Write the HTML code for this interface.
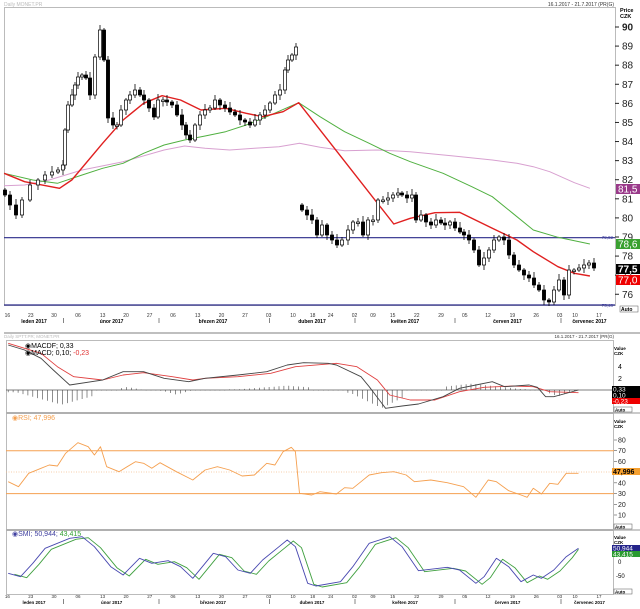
<!DOCTYPE html>
<html><head><meta charset="utf-8"><style>
body{margin:0;background:#fff;width:640px;height:609px;overflow:hidden;font-family:"Liberation Sans",sans-serif}
svg{display:block}
text{font-family:"Liberation Sans",sans-serif}
</style></head><body>
<svg id="s" width="640" height="609" viewBox="0 0 640 609" xmlns="http://www.w3.org/2000/svg">
<rect width="640" height="609" fill="#fff"/>
<text x="4" y="6" font-size="5" fill="#bbb">Daily MONET.PR</text>
<text x="614" y="6" font-size="5" fill="#333" text-anchor="end">16.1.2017 - 21.7.2017 (PR(G)</text>
<rect x="4.5" y="7.5" width="611" height="298" fill="none" stroke="#bbb"/>
<text x="620" y="12" font-size="5.5" font-weight="bold">Price</text>
<text x="620" y="18" font-size="5.5" font-weight="bold">CZK</text>
<g font-size="10" fill="#222" id="paxis"></g>
<line x1="4" y1="237.7" x2="615" y2="237.7" stroke="#2a2a8a" stroke-width="1.2"/>
<line x1="4" y1="305" x2="615" y2="305" stroke="#2a2a8a" stroke-width="1.2"/>
<text x="613" y="239" font-size="4.5" fill="#4040a0" text-anchor="end">79,02</text>
<text x="613" y="307" font-size="4.5" fill="#4040a0" text-anchor="end">75,48</text>
<g id="ma"></g>
<g id="candles"></g>
<rect x="616" y="184" width="24" height="10" fill="#9a3a8a"/><text x="618" y="192.5" font-size="10" fill="#fff">81,5</text>
<rect x="616" y="239" width="24" height="10" fill="#3aa030"/><text x="618" y="247.5" font-size="10" fill="#fff">78,6</text>
<rect x="616" y="264" width="24" height="10" fill="#000"/><text x="618" y="272.5" font-size="10" fill="#fff" font-weight="bold">77,5</text>
<rect x="616" y="275" width="24" height="10" fill="#e00"/><text x="618" y="283.5" font-size="10" fill="#fff">77,0</text>
<rect x="620" y="306" width="18" height="6" fill="#fff" stroke="#555" stroke-width=".5"/><text x="621" y="311" font-size="5" font-weight="bold">Auto</text>
<g id="xaxis1"></g>
<line x1="4" y1="333" x2="640" y2="333" stroke="#aaa" stroke-width="1.5"/>
<text x="4" y="338" font-size="4.5" fill="#bbb">Daily SPTT.PR; MONET.PR</text>
<text x="614" y="338" font-size="4.5" fill="#333" text-anchor="end">16.1.2017 - 21.7.2017 (PR(G)</text>
<rect x="6.5" y="340.5" width="607" height="72" fill="none" stroke="#bbb"/>
<line x1="6" y1="390" x2="614" y2="390" stroke="#555" stroke-width=".7"/>
<g id="macd"></g>
<text x="25" y="348" font-size="7">&#9673;MACDF; 0,33</text>
<text x="25" y="355" font-size="7">&#9673;MACD; 0,10; <tspan fill="#e03030">-0,23</tspan></text>
<text x="614" y="350" font-size="4.5" font-weight="bold">Value</text><text x="614" y="355" font-size="4.5" font-weight="bold">CZK</text>
<text x="618" y="369" font-size="7">4</text><text x="618" y="381" font-size="7">2</text>
<rect x="612" y="386" width="28" height="6" fill="#000"/><text x="613" y="391.5" font-size="6.5" fill="#fff">0,33</text>
<rect x="612" y="392" width="28" height="6" fill="#000"/><text x="613" y="397.5" font-size="6.5" fill="#fff">0,10</text>
<rect x="612" y="398" width="28" height="6" fill="#e00"/><text x="613" y="403.5" font-size="6.5" fill="#fff">-0,23</text>
<rect x="614" y="407" width="18" height="5" fill="#fff" stroke="#555" stroke-width=".5"/><text x="615" y="411.5" font-size="4.5" font-weight="bold">Auto</text>
<rect x="6.5" y="413.5" width="607" height="116" fill="none" stroke="#bbb"/>
<line x1="6" y1="413" x2="640" y2="413" stroke="#aaa" stroke-width="1.2"/>
<line x1="6" y1="450.7" x2="614" y2="450.7" stroke="#f5a050" stroke-width="1"/>
<line x1="6" y1="493.6" x2="614" y2="493.6" stroke="#f5a050" stroke-width="1"/>
<line x1="6" y1="472" x2="614" y2="472" stroke="#f5c090" stroke-width=".7" stroke-dasharray="1,1.5"/>
<g id="rsi"></g>
<text x="12" y="420" font-size="7" fill="#f5a050">&#9673;RSI; 47,996</text>
<text x="614" y="423" font-size="4.5" font-weight="bold">Value</text><text x="614" y="428" font-size="4.5" font-weight="bold">CZK</text>
<g id="raxis" font-size="7" fill="#222"></g>
<rect x="612" y="468" width="28" height="7" fill="#f5a030"/><text x="613" y="474" font-size="7" fill="#000" font-weight="bold">47,996</text>
<rect x="614" y="524" width="18" height="5" fill="#fff" stroke="#555" stroke-width=".5"/><text x="615" y="528.5" font-size="4.5" font-weight="bold">Auto</text>
<rect x="6.5" y="530.5" width="607" height="64" fill="none" stroke="#bbb"/>
<line x1="6" y1="530" x2="640" y2="530" stroke="#aaa" stroke-width="1.2"/>
<g id="smi"></g>
<text x="12" y="536" font-size="7" fill="#4040a0">&#9673;SMI; 50,944; <tspan fill="#30a030">43,415</tspan></text>
<text x="614" y="539" font-size="4.5" font-weight="bold">Value</text><text x="614" y="544" font-size="4.5" font-weight="bold">CZK</text>
<rect x="612" y="545" width="28" height="6" fill="#24248a"/><text x="613" y="550.5" font-size="6.5" fill="#fff">50,944</text>
<rect x="612" y="551" width="28" height="6" fill="#2a9a30"/><text x="613" y="556.5" font-size="6.5" fill="#fff">43,415</text>
<text x="618" y="564" font-size="6">0</text><text x="616" y="578" font-size="6">-50</text>
<rect x="614" y="589" width="18" height="5" fill="#fff" stroke="#555" stroke-width=".5"/><text x="615" y="593.5" font-size="4.5" font-weight="bold">Auto</text>
<g id="xaxis2"></g>
</svg>
<script>
var NS="http://www.w3.org/2000/svg";
function el(p,t,a,txt){var e=document.createElementNS(NS,t);for(var k in a)e.setAttribute(k,a[k]);if(txt!=null)e.textContent=txt;document.getElementById(p).appendChild(e);return e;}
function poly(p,pts,col,w,dx,dy){var s=pts.map(function(q){return ((q[0]+(dx||0))/2.4375).toFixed(1)+","+(q[1]/3+(dy||0)).toFixed(1)}).join(" ");el(p,"polyline",{points:s,fill:"none",stroke:col,"stroke-width":w||1,"stroke-linejoin":"round"});}
for(var v=76;v<=90;v++){var y=27+(90-v)*19.09;el("paxis","text",{x:622,y:y+3.5,"font-size":10,"font-weight":v==90?"bold":"normal"},""+v);el("paxis","line",{x1:615,x2:619,y1:y,y2:y,stroke:"#222"});}
poly("ma",[[10,557],[60,555],[120,540],[200,510],[300,485],[400,450],[450,438],[500,445],[560,450],[620,445],[680,440],[730,430],[780,442],[840,452],[920,450],[1000,455],[1100,467],[1200,480],[1260,490],[1300,500],[1340,515],[1400,548],[1438,565]],"#d8a0d0",1);
poly("ma",[[10,520],[80,540],[140,550],[200,525],[250,505],[300,490],[350,460],[400,435],[450,420],[500,408],[550,395],[600,375],[650,350],[700,323],[728,308],[780,350],[840,395],[900,430],[950,460],[1000,485],[1080,520],[1150,560],[1200,590],[1250,640],[1300,690],[1360,712],[1438,732]],"#50b040",1);
poly("ma",[[10,520],[60,545],[145,565],[175,540],[250,430],[300,360],[350,310],[395,287],[440,300],[490,330],[550,325],[600,340],[640,350],[690,335],[728,308],[960,672],[1000,655],[1060,638],[1120,637],[1200,685],[1260,720],[1300,755],[1360,800],[1400,820],[1438,828]],"#e02020",1.4);
var c1=[[5,195],[10,205],[16,215],[22,200],[30,185],[38,180],[45,175],[52,172],[58,170],[63,165],[65,130],[68,105],[72,95],[75,85],[78,77],[82,75],[86,78],[90,95],[95,57],[100,30],[104,60],[108,118],[113,125],[117,125],[121,110],[126,100],[130,95],[135,90],[140,95],[144,100],[149,108],[154,117],[158,100],[163,100],[167,102],[172,105],[177,115],[182,125],[186,135],[190,140],[195,125],[200,115],[205,110],[210,108],[215,100],[220,105],[225,108],[230,112],[235,115],[240,120],[245,122],[250,125],[255,120],[260,115],[265,110],[270,103],[275,95],[280,90],[285,70],[288,60],[292,55],[296,47]];
var c2=[[302,210],[307,215],[312,220],[317,235],[322,225],[327,235],[332,240],[337,245],[342,240],[348,230],[353,222],[358,222],[363,235],[368,220],[373,220],[378,200],[383,200],[388,198],[393,195],[398,193],[402,195],[407,198],[412,195],[416,220],[421,215],[426,222],[431,225],[436,220],[441,223],[445,225],[450,222],[455,228],[460,232],[464,235],[469,240],[474,250],[479,265],[484,258],[489,250],[494,240],[499,237],[504,240],[509,255],[514,265],[519,270],[524,275],[529,278],[534,285],[539,290],[544,300],[549,302],[554,290],[559,280],[564,295],[569,270],[574,270],[579,268],[584,265],[589,263],[594,268]];
function candles(arr,o0){var prev=o0;for(var i=0;i<arr.length;i++){var x=arr[i][0],c=arr[i][1],o=prev;var t=Math.min(o,c),b=Math.max(o,c);if(b-t<1.5){b=t+1.5;}
var wt=t-2-((i*7)%5),wb=b+2+((i*3)%4);el("candles","line",{x1:x,x2:x,y1:wt,y2:wb,stroke:"#000","stroke-width":.8});
el("candles","rect",{x:x-1.6,y:t,width:3.2,height:b-t,fill:c>o?"#000":"#fff",stroke:"#000","stroke-width":.7});prev=c;}}
candles(c1,190);candles(c2,205);
var dl=[[7.4,"16"],[30.8,"23"],[54,"30"],[78,"06"],[102.6,"13"],[126,"20"],[149.7,"27"],[173,"06"],[197.7,"13"],[221.5,"20"],[245,"27"],[268.7,"03"],[293,"10"],[312.6,"18"],[330.7,"24"],[354.5,"02"],[373,"09"],[392.6,"15"],[416.8,"22"],[441,"29"],[464.8,"05"],[488,"12"],[512.4,"19"],[536.2,"26"],[559.6,"03"],[575,"10"],[599,"17"]];
var ml=[[34,"leden 2017"],[111.6,"únor 2017"],[213,"březen 2017"],[312,"duben 2017"],[405,"květen 2017"],[507.5,"červen 2017"],[589.5,"červenec 2017"]];
var seps=[63.6,159,269.5,355,455,561];
function xaxis(g,y0,fs){dl.forEach(function(d){el(g,"text",{x:d[0],y:y0,"font-size":fs,"text-anchor":"middle",fill:"#333"},d[1]);});
ml.forEach(function(d){el(g,"text",{x:d[0],y:y0+6,"font-size":fs,"font-weight":"bold","text-anchor":"middle"},d[1]);});
seps.forEach(function(s){el(g,"line",{x1:s,x2:s,y1:y0+1,y2:y0+6,stroke:"#333","stroke-width":.6});});}
xaxis("xaxis1",317,5);xaxis("xaxis2",598,4.5);
var hist=[[20,230,315,150],[290,350,262,310],[390,470,285,430],[560,760,258,700],[840,990,325,930],[1080,1290,252,1150],[1330,1400,290,1360]];
for(var zx=20;zx<=1410;zx+=12){var y2=390.5;hist.forEach(function(r){if(zx>=r[0]&&zx<=r[1]){var f=1-Math.abs(zx-r[3])/Math.max(r[3]-r[0],r[1]-r[3],1);f=Math.max(f,0.15);y2=390+(r[2]-271)/3*f;}});
var xx=(zx/2.4375).toFixed(1);el("macd","line",{x1:xx,x2:xx,y1:390,y2:y2.toFixed(1),stroke:"#444","stroke-width":.6});}
poly("macd",[[20,130],[100,160],[140,200],[180,230],[250,240],[300,225],[350,218],[420,230],[470,240],[500,235],[580,230],[660,220],[720,200],[820,190],[870,200],[920,240],[950,285],[1000,300],[1060,300],[1120,275],[1180,262],[1250,258],[1300,260],[1340,275],[1410,278]],"#e04040",.9,0,300);
poly("macd",[[20,135],[60,150],[100,175],[130,210],[170,255],[250,240],[300,215],[350,215],[400,235],[460,245],[500,235],[580,225],[650,215],[700,195],[740,188],[800,190],[820,195],[880,230],[900,260],[940,325],[980,318],[1020,312],[1080,290],[1120,265],[1160,255],[1200,245],[1230,260],[1290,255],[1310,262],[1330,290],[1350,290],[1410,270]],"#444",.9,0,300);
poly("rsi",[[20,545],[45,560],[70,520],[100,505],[120,495],[140,498],[160,460],[190,428],[215,440],[230,465],[245,440],[260,500],[290,515],[330,485],[350,490],[370,505],[390,488],[430,515],[470,540],[500,510],[530,500],[560,510],[590,528],[620,525],[650,490],[670,495],[690,455],[710,442],[720,455],[730,580],[760,585],[780,575],[820,582],[840,563],[860,565],[880,545],[900,525],[930,518],[960,515],[990,525],[1010,545],[1050,540],[1090,548],[1130,560],[1160,592],[1190,540],[1210,545],[1240,572],[1270,585],[1285,592],[1300,565],[1320,582],[1340,550],[1360,553],[1380,520],[1410,520]],"#f5a050",.9,0,300);
[80,70,60,40,30,20,10].forEach(function(v){var y=440+(80-v)*1.0714;el("raxis","text",{x:618,y:y+2.5},""+v);el("raxis","line",{x1:614,x2:617,y1:y,y2:y,stroke:"#333","stroke-width":.5});});
var smi=[[20,820],[50,830],[80,790],[110,745],[140,730],[170,715],[200,710],[230,740],[270,800],[300,825],[340,775],[370,790],[410,782],[440,800],[470,835],[500,790],[520,760],[550,770],[580,810],[610,820],[640,780],[680,740],[700,720],[720,740],[750,850],[770,858],[830,845],[860,800],[900,730],[950,710],[980,740],[1020,812],[1090,802],[1120,810],[1160,850],[1180,830],[1210,775],[1240,800],[1270,845],[1300,825],[1320,835],[1350,810],[1380,770],[1410,745]];
poly("smi",smi.map(function(p){return [Math.min(p[0]+15,1410),p[1]+3]}),"#40a040",.9,0,300);
poly("smi",smi,"#4848b0",.9,0,300);
</script>
</body></html>
